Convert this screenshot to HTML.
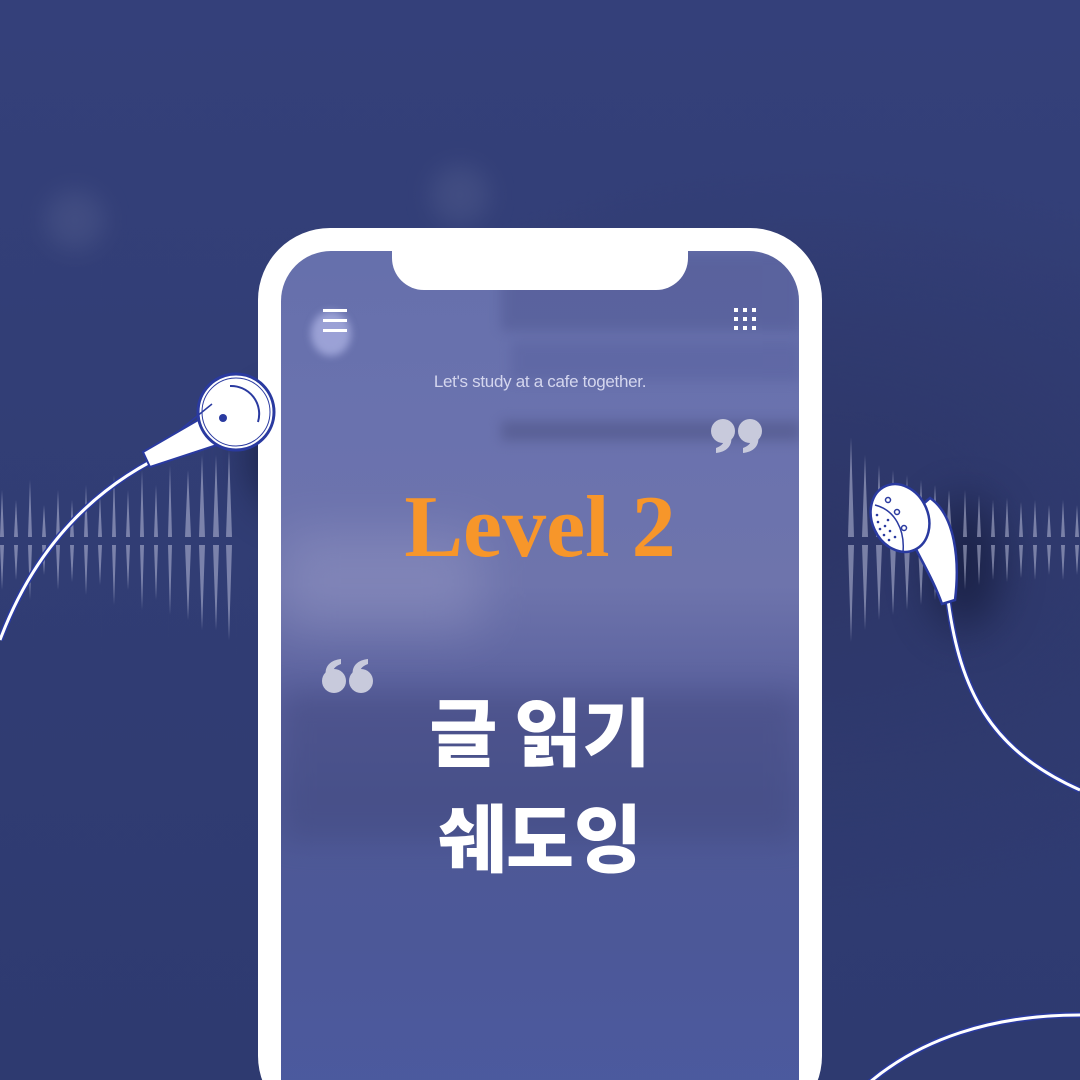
<!DOCTYPE html>
<html><head><meta charset="utf-8"><style>
html,body{margin:0;padding:0;width:1080px;height:1080px;overflow:hidden}
body{position:relative;font-family:"Liberation Sans","Noto Sans CJK KR",sans-serif;
background:radial-gradient(ellipse at 75% 50%,#2d3668 0%,rgba(45,54,104,0) 50%),linear-gradient(180deg,#34407a 0%,#313d74 50%,#2e3a70 100%);}
.blob{position:absolute;border-radius:50%;filter:blur(12px)}
.phone{position:absolute;left:258px;top:228px;width:564px;height:900px;background:#fff;border-radius:72px}
.screen{position:absolute;left:281px;top:251px;width:518px;height:880px;border-radius:50px;overflow:hidden;
background:linear-gradient(180deg,#6670ac 0%,#6a72ae 20%,#6e74ac 38%,#585f9c 52%,#4f5996 62%,#4c5898 78%,#4b5aa0 100%)}
.notch{position:absolute;left:392px;top:228px;width:296px;height:62px;background:#fff;border-radius:0 0 32px 32px}
.t{position:absolute;white-space:nowrap}
</style></head><body>
<div class="blob" style="left:45px;top:190px;width:60px;height:60px;background:#4a5588;opacity:.6"></div>
<div class="blob" style="left:430px;top:165px;width:60px;height:60px;background:#4a5588;opacity:.6"></div>
<div class="blob" style="left:250px;top:400px;width:90px;height:110px;background:#141a3a;opacity:.8;filter:blur(22px)"></div>
<div class="blob" style="left:930px;top:500px;width:70px;height:130px;background:#141a3a;opacity:.7;filter:blur(22px)"></div>

<svg style="position:absolute;left:0;top:0" width="1080" height="1080">
<g fill="#b8bcd8" opacity="0.55">
<polygon points="0,537 4,537 2,490"/><polygon points="0,545 4,545 2,590"/>
<polygon points="14,537 18,537 16,500"/><polygon points="14,545 18,545 16,580"/>
<polygon points="28,537 32,537 30,480"/><polygon points="28,545 32,545 30,600"/>
<polygon points="42,537 46,537 44,505"/><polygon points="42,545 46,545 44,575"/>
<polygon points="56,537 60,537 58,490"/><polygon points="56,545 60,545 58,590"/>
<polygon points="70,537 74,537 72,500"/><polygon points="70,545 74,545 72,582"/>
<polygon points="84,537 88,537 86,485"/><polygon points="84,545 88,545 86,595"/>
<polygon points="98,537 102,537 100,495"/><polygon points="98,545 102,545 100,585"/>
<polygon points="112,537 116,537 114,475"/><polygon points="112,545 116,545 114,605"/>
<polygon points="126,537 130,537 128,490"/><polygon points="126,545 130,545 128,590"/>
<polygon points="140,537 144,537 142,470"/><polygon points="140,545 144,545 142,610"/>
<polygon points="154,537 158,537 156,485"/><polygon points="154,545 158,545 156,600"/>
<polygon points="168,537 172,537 170,465"/><polygon points="168,545 172,545 170,615"/>
<polygon points="185,537 191,537 188,470"/><polygon points="185,545 191,545 188,620"/>
<polygon points="199,537 205,537 202,455"/><polygon points="199,545 205,545 202,630"/>
<polygon points="213,537 219,537 216,455"/><polygon points="213,545 219,545 216,630"/>
<polygon points="226,537 232,537 229,450"/><polygon points="226,545 232,545 229,640"/>
<polygon points="848,537 854,537 851,437"/><polygon points="848,545 854,545 851,642"/>
<polygon points="862,537 868,537 865,455"/><polygon points="862,545 868,545 865,630"/>
<polygon points="876,537 882,537 879,465"/><polygon points="876,545 882,545 879,620"/>
<polygon points="890,537 896,537 893,470"/><polygon points="890,545 896,545 893,615"/>
<polygon points="904,537 910,537 907,475"/><polygon points="904,545 910,545 907,610"/>
<polygon points="918,537 924,537 921,480"/><polygon points="918,545 924,545 921,605"/>
<polygon points="932,537 938,537 935,485"/><polygon points="932,545 938,545 935,600"/>
<polygon points="946,537 952,537 949,490"/><polygon points="946,545 952,545 949,595"/>
<polygon points="963,537 967,537 965,490"/><polygon points="963,545 967,545 965,590"/>
<polygon points="977,537 981,537 979,495"/><polygon points="977,545 981,545 979,585"/>
<polygon points="991,537 995,537 993,500"/><polygon points="991,545 995,545 993,580"/>
<polygon points="1005,537 1009,537 1007,498"/><polygon points="1005,545 1009,545 1007,582"/>
<polygon points="1019,537 1023,537 1021,502"/><polygon points="1019,545 1023,545 1021,578"/>
<polygon points="1033,537 1037,537 1035,500"/><polygon points="1033,545 1037,545 1035,580"/>
<polygon points="1047,537 1051,537 1049,505"/><polygon points="1047,545 1051,545 1049,575"/>
<polygon points="1061,537 1065,537 1063,500"/><polygon points="1061,545 1065,545 1063,580"/>
<polygon points="1075,537 1079,537 1077,505"/><polygon points="1075,545 1079,545 1077,575"/>
</g>
</svg>

<div class="phone"></div>
<div class="screen">
  <div class="blob" style="left:30px;top:60px;width:40px;height:45px;background:#a8aee0;opacity:.8;filter:blur(4px)"></div>
  <div style="position:absolute;left:220px;top:0;width:300px;height:80px;background:#4e5690;opacity:.5;filter:blur(6px)"></div>
  <div style="position:absolute;left:230px;top:90px;width:290px;height:40px;background:#5a63a0;opacity:.6;filter:blur(6px)"></div>
  <div style="position:absolute;left:220px;top:170px;width:300px;height:20px;background:#4a4f80;opacity:.5;filter:blur(6px)"></div>
  <div style="position:absolute;left:0;top:280px;width:200px;height:100px;background:#9a9cc8;opacity:.4;filter:blur(25px)"></div>
  <div style="position:absolute;left:0;top:440px;width:518px;height:150px;background:#3e4478;opacity:.4;filter:blur(15px)"></div>
</div>
<div class="notch"></div>

<div style="position:absolute;left:323px;top:309px;width:24px;height:3px;background:#fff;box-shadow:0 10px 0 #fff,0 20px 0 #fff"></div>
<svg style="position:absolute;left:734px;top:308px" width="24" height="24" fill="#fff">
<rect x="0" y="0" width="4" height="4"/><rect x="9" y="0" width="4" height="4"/><rect x="18" y="0" width="4" height="4"/>
<rect x="0" y="9" width="4" height="4"/><rect x="9" y="9" width="4" height="4"/><rect x="18" y="9" width="4" height="4"/>
<rect x="0" y="18" width="4" height="4"/><rect x="9" y="18" width="4" height="4"/><rect x="18" y="18" width="4" height="4"/>
</svg>

<div class="t" style="left:0;width:1080px;text-align:center;top:372px;font-size:17px;color:#d4d6ee;letter-spacing:-0.3px">Let's study at a cafe together.</div>
<svg style="position:absolute;left:0;top:0" width="1080" height="1080" fill="#c8cadc">
<circle cx="723" cy="431" r="12"/><path d="M731,436 C733,446 726,452 716,453 L716,448 C722,446 725,442 724,438 Z"/>
<circle cx="750" cy="431" r="12"/><path d="M758,436 C760,446 753,452 743,453 L743,448 C749,446 752,442 751,438 Z"/>
<circle cx="334" cy="681" r="12"/><path d="M326,676 C324,666 331,660 341,659 L341,664 C335,666 332,670 333,674 Z"/>
<circle cx="361" cy="681" r="12"/><path d="M353,676 C351,666 358,660 368,659 L368,664 C362,666 359,670 360,674 Z"/>
</svg>
<div class="t" style="left:0;width:1080px;text-align:center;top:480px;font-size:88px;line-height:96px;color:#f7962a;font-family:'Liberation Serif',serif;font-weight:bold">Level 2</div>
<div class="t" style="left:0;width:1080px;text-align:center;top:676px;font-size:74px;line-height:106px;color:#fff;font-weight:900;font-family:'Noto Sans CJK KR',sans-serif">글 읽기<br>쉐도잉</div>

<svg style="position:absolute;left:0;top:0" width="1080" height="1080">
<g fill="none" stroke="#2a3aa0" stroke-width="6">
<path d="M150,462 C80,500 30,560 0,640"/>
<path d="M948,600 C960,690 990,750 1080,790"/>
<path d="M870,1082 C920,1040 990,1015 1080,1015"/>
</g>
<g fill="none" stroke="#fff" stroke-width="3">
<path d="M150,462 C80,500 30,560 0,640"/>
<path d="M948,600 C960,690 990,750 1080,790"/>
<path d="M870,1082 C920,1040 990,1015 1080,1015"/>
</g>
<path d="M143,452 L212,412 L226,442 L150,467 Z" fill="#fff" stroke="#2a3aa0" stroke-width="2"/>
<circle cx="236" cy="412" r="38" fill="#fff" stroke="#2a3aa0" stroke-width="3"/>
<circle cx="236" cy="412" r="34" fill="none" stroke="#2a3aa0" stroke-width="1"/>
<path d="M230,386 A28,28 0 0 1 258,422" fill="none" stroke="#2a3aa0" stroke-width="2"/>
<circle cx="223" cy="418" r="4" fill="#2a3aa0"/>
<path d="M212,404 L180,430" stroke="#2a3aa0" stroke-width="1.5"/>
<path d="M930,498 C955,515 960,560 955,600 L942,604 C930,570 910,545 905,520 Z" fill="#fff" stroke="#2a3aa0" stroke-width="2.5"/>
<ellipse cx="900" cy="518" rx="28" ry="35" fill="#fff" stroke="#2a3aa0" stroke-width="2.5" transform="rotate(-25 900 518)"/>
<path d="M875,505 C895,510 905,530 903,552" fill="none" stroke="#2a3aa0" stroke-width="1.5"/>
<g fill="none" stroke="#2a3aa0" stroke-width="1.5"><circle cx="888" cy="500" r="2.5"/><circle cx="897" cy="512" r="2.5"/><circle cx="904" cy="528" r="2.5"/></g>
<g fill="#2a3aa0"><circle cx="877" cy="515" r="1.3"/><circle cx="878" cy="522" r="1.3"/><circle cx="880" cy="529" r="1.3"/><circle cx="884" cy="535" r="1.3"/><circle cx="889" cy="540" r="1.3"/><circle cx="885" cy="526" r="1.3"/><circle cx="890" cy="531" r="1.3"/><circle cx="895" cy="537" r="1.3"/><circle cx="888" cy="520" r="1.3"/></g>
</svg>
</body></html>
